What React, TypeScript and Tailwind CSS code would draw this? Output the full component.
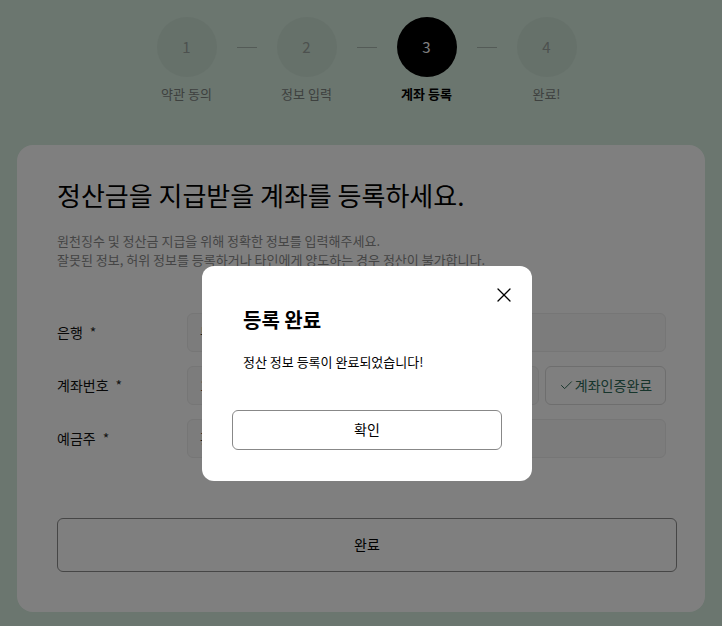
import { X, Check } from "lucide-react"

const steps = [
  { n: 1, label: "약관 동의" },
  { n: 2, label: "정보 입력" },
  { n: 3, label: "계좌 등록" },
  { n: 4, label: "완료!" },
]
const current = 3

function Stepper() {
  return (
    <div className="flex items-start justify-center pt-[17px] pl-[11px]">
      {steps.map((s, i) => (
        <div key={s.n} className="flex items-start">
          <div className="flex flex-col items-center w-[80px]">
            <div
              className={
                s.n === current
                  ? "w-[60px] h-[60px] rounded-full bg-black text-white flex items-center justify-center text-[15px]"
                  : "w-[60px] h-[60px] rounded-full bg-[#cde2d5] text-[#9aa39e] flex items-center justify-center text-[15px]"
              }
            >
              {s.n}
            </div>
            <span
              className={
                s.n === current
                  ? "mt-[7px] text-[13px] font-bold text-black"
                  : "mt-[7px] text-[13px] text-[#7c827e]"
              }
            >
              {s.label}
            </span>
          </div>
          {i < steps.length - 1 && <div className="w-[20px] h-px bg-[#a9b7ae] mt-[30px] mx-[10px]" />}
        </div>
      ))}
    </div>
  )
}

function Field({ label, children }: { label: string; children: React.ReactNode }) {
  return (
    <div className="flex items-center h-[40px]">
      <span className="w-[130px] text-[14px] text-[#111]">
        {label}
        <span className="ml-[7px] text-[#2c2c2c]">*</span>
      </span>
      {children}
    </div>
  )
}

export default function App() {
  return (
    <div
      className="relative w-[722px] h-[626px] overflow-hidden bg-[#d6ecde]"
      style={{ fontFamily: '"Noto Sans CJK KR", "Noto Sans", sans-serif' }}
    >
      <Stepper />

      <div className="mx-[17px] mt-[41px] h-[467px] rounded-[16px] bg-white pl-[40px] pr-[28px] pt-[30px]">
        <h1 className="text-[26px] leading-[40px] text-black">정산금을 지급받을 계좌를 등록하세요.</h1>
        <div className="mt-[16px] text-[13px] leading-[19px] text-[#8a8a8a]">
          <p>원천징수 및 정산금 지급을 위해 정확한 정보를 입력해주세요.</p>
          <p>잘못된 정보, 허위 정보를 등록하거나 타인에게 양도하는 경우 정산이 불가합니다.</p>
        </div>

        <div className="mt-[44px] flex flex-col gap-[13px]">
          <Field label="은행">
            <div className="w-[479px] h-[39px] rounded-[6px] border border-[#ececec] bg-[#f8f8f8] px-[12px] flex items-center text-[14px] text-[#333]">
              부산은행
            </div>
          </Field>
          <Field label="계좌번호">
            <div className="w-[352px] h-[39px] rounded-[6px] border border-[#ececec] bg-[#f8f8f8] px-[12px] flex items-center text-[14px] text-[#333]">
              1234567890123
            </div>
            <button className="ml-[6px] w-[121px] h-[39px] rounded-[6px] border border-[#dcdcdc] bg-white flex items-center justify-center gap-[1px] text-[14px] text-[#2e6b58]">
              <Check size={15} strokeWidth={1.6} />
              계좌인증완료
            </button>
          </Field>
          <Field label="예금주">
            <div className="w-[479px] h-[39px] rounded-[6px] border border-[#ececec] bg-[#f8f8f8] px-[12px] flex items-center text-[14px] text-[#333]">
              홍길동
            </div>
          </Field>
        </div>

        <button className="mt-[59px] w-[620px] h-[54px] rounded-[6px] border border-[#8c8c8c] bg-white text-[14px] text-black">
          완료
        </button>
      </div>

      <div className="absolute inset-0 bg-black/50" />

      <div className="absolute left-[202px] top-[266px] w-[330px] h-[215px] rounded-[12px] bg-white px-[30px] pt-[17px]">
        <div className="flex justify-end">
          <X size={24} strokeWidth={1.3} className="text-black -mr-[14px]" />
        </div>
        <h2 className="mt-[-1px] ml-[11px] text-[20px] font-bold text-black leading-[28px]">등록 완료</h2>
        <p className="mt-[18px] ml-[11px] text-[13px] text-black">정산 정보 등록이 완료되었습니다!</p>
        <button className="mt-[38px] w-[270px] h-[40px] rounded-[6px] border border-[#888] bg-white text-[14px] text-black">
          확인
        </button>
      </div>
    </div>
  )
}
